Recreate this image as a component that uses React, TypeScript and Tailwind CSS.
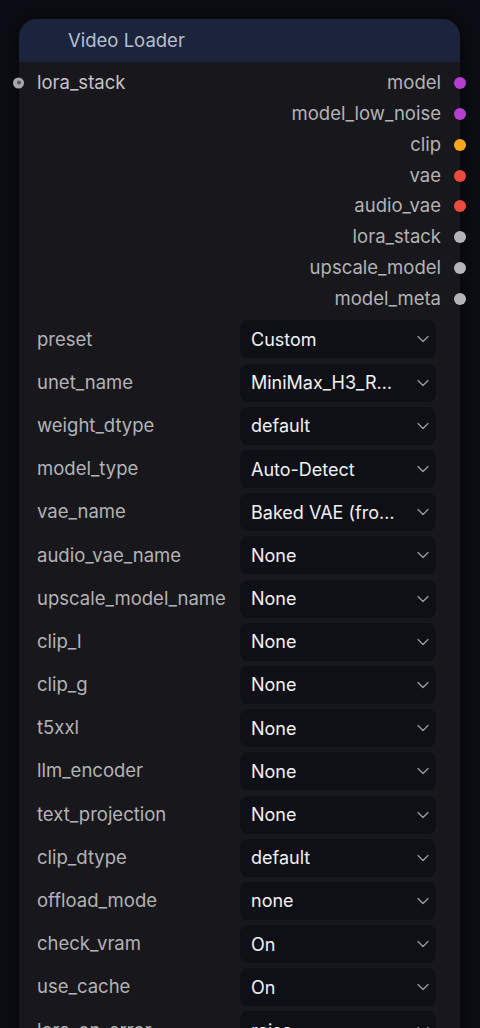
import { ChevronDown } from "lucide-react";

const outputs = [
  { name: "model", color: "bg-[#b63fcf]" },
  { name: "model_low_noise", color: "bg-[#b63fcf]" },
  { name: "clip", color: "bg-[#f7a81b]" },
  { name: "vae", color: "bg-[#ee4a3f]" },
  { name: "audio_vae", color: "bg-[#ee4a3f]" },
  { name: "lora_stack", color: "bg-[#b5b5b8]" },
  { name: "upscale_model", color: "bg-[#b5b5b8]" },
  { name: "model_meta", color: "bg-[#b5b5b8]" },
];

const widgets = [
  ["preset", "Custom"],
  ["unet_name", "MiniMax_H3_R…"],
  ["weight_dtype", "default"],
  ["model_type", "Auto-Detect"],
  ["vae_name", "Baked VAE (fro…"],
  ["audio_vae_name", "None"],
  ["upscale_model_name", "None"],
  ["clip_l", "None"],
  ["clip_g", "None"],
  ["t5xxl", "None"],
  ["llm_encoder", "None"],
  ["text_projection", "None"],
  ["clip_dtype", "default"],
  ["offload_mode", "none"],
  ["check_vram", "On"],
  ["use_cache", "On"],
  ["lora_on_error", "raise"],
];

function Widget({ label, value }: { label: string; value: string }) {
  return (
    <div className="flex h-[43.2px] items-center">
      <span className="w-[203px] shrink-0 truncate text-[18.5px] text-[#b3b3b6]">{label}</span>
      <div className="flex h-[38px] w-[196px] items-center justify-between rounded-lg bg-[#0f1016] pl-[11px] pr-[3px]">
        <span className="truncate text-[18px] text-[#f2f2f2]">{value}</span>
        <ChevronDown className="h-5 w-5 shrink-0 text-[#9a9aa2]" strokeWidth={1.5} />
      </div>
    </div>
  );
}

export default function App() {
  return (
    <div className="h-[1028px] overflow-hidden bg-[#0b0d14] pt-[19px] font-['Inter',sans-serif]">
      <div className="relative ml-[19px] w-[441px] rounded-t-[18px] bg-[#18181c] shadow-[0_0_24px_rgba(0,0,0,0.6)]">
        <div className="flex h-[43px] items-center rounded-t-[18px] bg-[#1b243a] pl-[49px] text-[18.5px] text-[#b7bfcc]">
          Video Loader
        </div>

        <div className="relative pt-[5.5px]">
          {outputs.map((o, i) => (
            <div key={o.name} className="relative flex h-[30.86px] items-center justify-end pr-[19px]">
              {i === 0 && (
                <>
                  <span className="absolute left-[-6px] top-1/2 flex h-[11px] w-[11px] -translate-y-1/2 items-center justify-center rounded-full bg-[#a9a9ad]">
                    <span className="h-[4px] w-[4px] rounded-full bg-[#55555a]" />
                  </span>
                  <span className="absolute left-[18px] text-[18.5px] text-[#c4c4c7]">lora_stack</span>
                </>
              )}
              <span className="text-[18.5px] text-[#b3b3b6]">{o.name}</span>
              <span className={`absolute right-[-6px] top-1/2 h-[12px] w-[12px] -translate-y-1/2 rounded-full ${o.color}`} />
            </div>
          ))}
        </div>

        <div className="mt-[3.5px] pl-[18px]">
          {widgets.map(([l, v]) => (
            <Widget key={l} label={l} value={v} />
          ))}
        </div>
      </div>
    </div>
  );
}
